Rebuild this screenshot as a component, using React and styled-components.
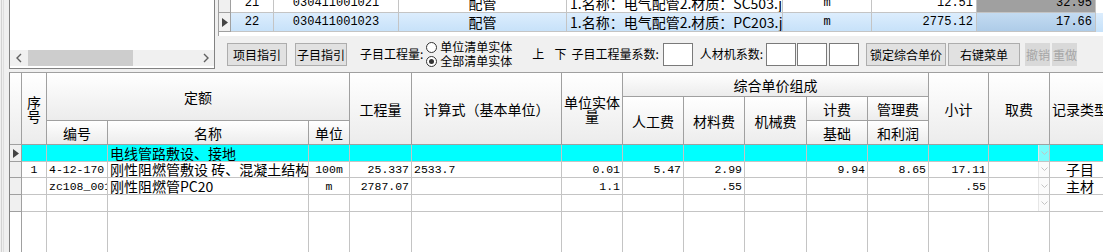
import React from 'react';
import styled, { createGlobalStyle } from 'styled-components';

// ---------------------------------------------------------------------------
// Fonts / colours
// ---------------------------------------------------------------------------
const CJK = `"Noto Sans CJK SC", "Liberation Sans", sans-serif`;
const MONO = `"Liberation Mono", "Noto Sans CJK SC", monospace`;

const GlobalStyle = createGlobalStyle`
  html, body { margin: 0; padding: 0; background: #f0f0f0; }
  body { font-family: ${CJK}; color: #000; }
`;

// ---------------------------------------------------------------------------
// Data
// ---------------------------------------------------------------------------
const UPPER_ROWS = [
  { no: '21', code: '030411001021', name: '配管', desc: '1.名称：电气配管2.材质：SC503.j', unit: 'm', qty: '12.51', price: '32.95' },
  { no: '22', code: '030411001023', name: '配管', desc: '1.名称：电气配管2.材质：PC203.j', unit: 'm', qty: '2775.12', price: '17.66', selected: true },
];

const LOWER_COLS = [
  { key: 'no', align: 'center', mono: true },
  { key: 'code', align: 'left', mono: true },
  { key: 'name', align: 'left' },
  { key: 'unit', align: 'center', mono: true },
  { key: 'qty', align: 'right', mono: true },
  { key: 'expr', align: 'left', mono: true },
  { key: 'unitQty', align: 'right', mono: true },
  { key: 'labor', align: 'right', mono: true },
  { key: 'material', align: 'right', mono: true },
  { key: 'machine', align: 'right', mono: true },
  { key: 'base', align: 'right', mono: true },
  { key: 'mgmt', align: 'right', mono: true },
  { key: 'subtotal', align: 'right', mono: true },
  { key: 'fee', align: 'left', dropdown: true },
  { key: 'type', align: 'center' },
];

const LOWER_ROWS = [
  { id: 'g', height: 17, group: true, current: true, name: '电线管路敷设、接地' },
  { id: 'r1', height: 16, no: '1', code: '4-12-170', name: '刚性阻燃管敷设 砖、混凝土结构暗配', unit: '100m', qty: '25.337', expr: '2533.7', unitQty: '0.01', labor: '5.47', material: '2.99', base: '9.94', mgmt: '8.65', subtotal: '17.11', type: '子目' },
  { id: 'r2', height: 17, code: 'zc108_001', name: '刚性阻燃管PC20', unit: 'm', qty: '2787.07', unitQty: '1.1', material: '.55', subtotal: '.55', type: '主材' },
  { id: 'r3', height: 17 },
];

const JUSTIFY = { left: 'flex-start', center: 'center', right: 'flex-end' };

// ---------------------------------------------------------------------------
// Page frame
// ---------------------------------------------------------------------------
const Page = styled.div`
  width: 1103px;
  height: 252px;
  overflow: hidden;
  display: flex;
  background: #f0f0f0;
`;

const EdgeStrip = styled.div`
  width: 9px;
  flex-shrink: 0;
  background: linear-gradient(
    to right,
    #f0f0f0 0 1px,
    #d2d2d2 1px 2px,
    #f0f0f0 2px 3px,
    #dedede 3px 4px,
    #f0f0f0 4px
  );
`;

const Main = styled.div`
  flex: 1;
  min-width: 0;
  display: flex;
  flex-direction: column;
`;

const TopArea = styled.div`
  height: 72px;
  flex-shrink: 0;
  display: flex;
`;

// Tree panel (left) -----------------------------------------------------------
const TreePanel = styled.div`
  width: 206px;
  height: 69px;
  flex-shrink: 0;
  box-sizing: border-box;
  border: 1px solid #828282;
  border-top: none;
  background: #ffffff;
  display: flex;
  flex-direction: column;
  justify-content: flex-end;
`;

const HScroll = styled.div`
  height: 16px;
  margin-bottom: 2px;
  background: #f0f0f0;
  display: flex;
  align-items: stretch;
`;

const ScrollArrow = styled.div`
  width: 17px;
  display: flex;
  align-items: center;
  justify-content: center;
`;

const ScrollTrack = styled.div`
  flex: 1;
  display: flex;
  align-items: stretch;
  padding-left: 1px;
`;

const ScrollThumb = styled.div`
  width: 105px;
  background: #cdcdcd;
`;

// Right pane ------------------------------------------------------------------
const RightPane = styled.div`
  flex: 1;
  min-width: 0;
  display: flex;
  flex-direction: column;
`;

const UpperGrid = styled.div`
  height: 36px;
  margin-left: 3px;
  box-sizing: border-box;
  padding-bottom: 4px;
  background: #ffffff;
  border-left: 1px solid #a0a0a0;
  display: flex;
  flex-direction: column;
  justify-content: flex-end;
  overflow: hidden;
`;

const UpRow = styled.div`
  display: grid;
  grid-template-columns: 12px 43px 125px 168px 216px 89px 105px 119px;
  height: 19px;
  flex-shrink: 0;
  background: ${(p) => (p.$selected ? 'linear-gradient(#dcedfd, #c6e1f9)' : '#ffffff')};
`;

const UpIndicator = styled.div`
  border-right: 1px solid #a0a0a0;
  border-bottom: 1px solid #a0a0a0;
  background: #f0f0f0;
  display: flex;
  align-items: center;
  justify-content: center;
`;

const UpCell = styled.div`
  border-right: 1px solid #c4c4c4;
  border-bottom: 1px solid #c4c4c4;
  display: flex;
  align-items: center;
  justify-content: ${(p) => JUSTIFY[p.$align || 'left']};
  padding: 0 3px;
  overflow: hidden;
  white-space: nowrap;
  font-family: ${(p) => (p.$mono ? MONO : CJK)};
  font-size: ${(p) => (p.$mono ? '12px' : '14px')};
  line-height: 16px;
  background: ${(p) => p.$bg || 'transparent'};
`;

// Toolbar ---------------------------------------------------------------------
const Toolbar = styled.div`
  height: 36px;
  display: flex;
  align-items: center;
  padding-left: 12px;
  font-family: ${CJK};
  font-size: 12px;
  white-space: nowrap;
`;

const Button = styled.button`
  height: 23px;
  width: ${(p) => p.$w}px;
  margin-left: ${(p) => p.$ml || 0}px;
  padding: 0;
  box-sizing: border-box;
  font-family: ${CJK};
  font-size: 12px;
  color: ${(p) => (p.disabled ? '#a6a6a6' : '#000000')};
  background: ${(p) => (p.disabled ? '#d9d9d9' : '#e1e1e1')};
  border: 1px solid ${(p) => (p.disabled ? '#d9d9d9' : '#adadad')};
  border-radius: 0;
  flex-shrink: 0;
`;

const Label = styled.span`
  margin-left: ${(p) => p.$ml || 0}px;
  line-height: 14px;
`;

const RadioGroup = styled.div`
  margin-left: 3px;
  display: flex;
  flex-direction: column;
`;

const RadioRow = styled.label`
  display: flex;
  align-items: center;
  gap: 3px;
  height: 14px;
  line-height: 14px;
`;

const RadioDot = styled.span`
  width: 11px;
  height: 11px;
  box-sizing: border-box;
  border-radius: 50%;
  border: 1px solid #333333;
  background: #ffffff;
  display: flex;
  align-items: center;
  justify-content: center;

  &::after {
    content: '';
    width: 5px;
    height: 5px;
    border-radius: 50%;
    background: ${(p) => (p.$checked ? '#333333' : 'transparent')};
  }
`;

const Box = styled.div`
  width: 30px;
  height: 23px;
  margin-left: ${(p) => p.$ml || 0}px;
  box-sizing: border-box;
  background: #ffffff;
  border: 1px solid #7a7a7a;
  flex-shrink: 0;
`;

// Lower grid ------------------------------------------------------------------
const LowerGrid = styled.div`
  flex: 1;
  width: 1102px;
  box-sizing: border-box;
  border-top: 1px solid #a0a0a0;
  border-left: 1px solid #828282;
  background: #ffffff;
  display: grid;
  grid-template-columns: 12px 25px 61px 201px 41px 62px 150px 61px 61px 61px 62px 61px 61px 60px 61px 61px;
  grid-template-rows: 24px 24px 24px ${(p) => p.$rows} 1fr;
`;

const HeadCell = styled.div`
  grid-column: ${(p) => p.$c} / span ${(p) => p.$cs || 1};
  grid-row: ${(p) => p.$r} / span ${(p) => p.$rs || 1};
  display: flex;
  align-items: center;
  justify-content: center;
  text-align: center;
  padding: 0 2px;
  overflow: hidden;
  background: linear-gradient(#ffffff, #ececec);
  border-right: 1px solid #a0a0a0;
  border-bottom: 1px solid #a0a0a0;
  font-family: ${CJK};
  font-size: 14px;
  line-height: 14px;
`;

const IndCell = styled.div`
  background: #f0f0f0;
  border-right: 1px solid #a0a0a0;
  border-bottom: 1px solid #a0a0a0;
  display: flex;
  align-items: center;
  justify-content: center;
`;

const Cell = styled.div`
  position: relative;
  border-right: 1px solid #c4c4c4;
  border-bottom: 1px solid #c4c4c4;
  background: ${(p) => (p.$group ? '#00ffff' : '#ffffff')};
  display: flex;
  align-items: center;
  justify-content: ${(p) => JUSTIFY[p.$align]};
  padding: 0 2px;
  overflow: hidden;
  white-space: nowrap;
  font-family: ${(p) => (p.$mono ? MONO : CJK)};
  font-size: ${(p) => (p.$mono ? '11.5px' : '14px')};
  line-height: 15px;
`;

const DropArrow = styled.span`
  position: absolute;
  top: 0;
  right: 0;
  bottom: 0;
  width: 11px;
  box-sizing: border-box;
  border-left: 1px solid #e6e6e6;
  background: ${(p) => (p.$group ? '#7ffcfc' : '#fbfbfb')};
  display: flex;
  align-items: center;
  justify-content: center;
`;

const FillCell = styled.div`
  border-right: 1px solid ${(p) => (p.$ind ? '#a0a0a0' : '#c4c4c4')};
  background: #ffffff;
`;

// ---------------------------------------------------------------------------
// Small drawings
// ---------------------------------------------------------------------------
function Pointer() {
  return (
    <svg width="6" height="9" viewBox="0 0 6 9">
      <path d="M0 0 L6 4.5 L0 9 Z" fill="#444444" />
    </svg>
  );
}

function Chevron({ dir }) {
  const d = dir === 'left' ? 'M5 1 L1 5 L5 9' : 'M1 1 L5 5 L1 9';
  return (
    <svg width="6" height="10" viewBox="0 0 6 10">
      <path d={d} fill="none" stroke="#606060" strokeWidth="1.4" />
    </svg>
  );
}

function DownChevron() {
  return (
    <svg width="7" height="5" viewBox="0 0 7 5">
      <path d="M0.5 0.5 L3.5 3.5 L6.5 0.5" fill="none" stroke="#c4c4c4" strokeWidth="1" />
    </svg>
  );
}

// ---------------------------------------------------------------------------
// Sections
// ---------------------------------------------------------------------------
function Tree() {
  return (
    <TreePanel>
      <HScroll>
        <ScrollArrow><Chevron dir="left" /></ScrollArrow>
        <ScrollTrack><ScrollThumb /></ScrollTrack>
        <ScrollArrow><Chevron dir="right" /></ScrollArrow>
      </HScroll>
    </TreePanel>
  );
}

function ListGrid() {
  return (
    <UpperGrid>
      {UPPER_ROWS.map((r) => (
        <UpRow key={r.no} $selected={r.selected}>
          <UpIndicator>{r.selected && <Pointer />}</UpIndicator>
          <UpCell $align="center" $mono>{r.no}</UpCell>
          <UpCell $align="center" $mono>{r.code}</UpCell>
          <UpCell $align="center">{r.name}</UpCell>
          <UpCell>{r.desc}</UpCell>
          <UpCell $align="center" $mono>{r.unit}</UpCell>
          <UpCell $align="right" $mono>{r.qty}</UpCell>
          <UpCell
            $align="right"
            $mono
            $bg={r.selected ? 'linear-gradient(#c3dbf1, #aecce8)' : '#a0a0a0'}
          >
            {r.price}
          </UpCell>
        </UpRow>
      ))}
    </UpperGrid>
  );
}

function ToolStrip() {
  return (
    <Toolbar>
      <Button $w={60}>项目指引</Button>
      <Button $w={52} $ml={8}>子目指引</Button>
      <Label $ml={13}>子目工程量:</Label>
      <RadioGroup>
        <RadioRow><RadioDot />单位清单实体</RadioRow>
        <RadioRow><RadioDot $checked />全部清单实体</RadioRow>
      </RadioGroup>
      <Label $ml={20}>上</Label>
      <Label $ml={10}>下</Label>
      <Label $ml={5}>子目工程量系数:</Label>
      <Box $ml={4} />
      <Label $ml={7}>人材机系数:</Label>
      <Box $ml={3} />
      <Box $ml={1} />
      <Box $ml={2} />
      <Button $w={80} $ml={7}>锁定综合单价</Button>
      <Button $w={72} $ml={2}>右键菜单</Button>
      <Button $w={25} $ml={5} disabled>撤销</Button>
      <Button $w={25} $ml={2} disabled>重做</Button>
    </Toolbar>
  );
}

function QuotaGrid() {
  const rowTracks = LOWER_ROWS.map((r) => `${r.height}px`).join(' ');
  return (
    <LowerGrid $rows={rowTracks}>
      <HeadCell $c={1} $r={1} $rs={3} />
      <HeadCell $c={2} $r={1} $rs={3}>序号</HeadCell>
      <HeadCell $c={3} $r={1} $cs={3} $rs={2}>定额</HeadCell>
      <HeadCell $c={3} $r={3}>编号</HeadCell>
      <HeadCell $c={4} $r={3}>名称</HeadCell>
      <HeadCell $c={5} $r={3}>单位</HeadCell>
      <HeadCell $c={6} $r={1} $rs={3}>工程量</HeadCell>
      <HeadCell $c={7} $r={1} $rs={3}>计算式（基本单位）</HeadCell>
      <HeadCell $c={8} $r={1} $rs={3}>单位实体量</HeadCell>
      <HeadCell $c={9} $r={1} $cs={5}>综合单价组成</HeadCell>
      <HeadCell $c={9} $r={2} $rs={2}>人工费</HeadCell>
      <HeadCell $c={10} $r={2} $rs={2}>材料费</HeadCell>
      <HeadCell $c={11} $r={2} $rs={2}>机械费</HeadCell>
      <HeadCell $c={12} $r={2}>计费</HeadCell>
      <HeadCell $c={12} $r={3}>基础</HeadCell>
      <HeadCell $c={13} $r={2}>管理费</HeadCell>
      <HeadCell $c={13} $r={3}>和利润</HeadCell>
      <HeadCell $c={14} $r={1} $rs={3}>小计</HeadCell>
      <HeadCell $c={15} $r={1} $rs={3}>取费</HeadCell>
      <HeadCell $c={16} $r={1} $rs={3}>记录类型</HeadCell>

      {LOWER_ROWS.map((row) => (
        <React.Fragment key={row.id}>
          <IndCell>{row.current && <Pointer />}</IndCell>
          {LOWER_COLS.map((col) => (
            <Cell key={col.key} $align={col.align} $mono={col.mono} $group={row.group}>
              {row[col.key]}
              {col.dropdown && (
                <DropArrow $group={row.group}><DownChevron /></DropArrow>
              )}
            </Cell>
          ))}
        </React.Fragment>
      ))}

      <FillCell $ind />
      {LOWER_COLS.map((col) => (
        <FillCell key={col.key} />
      ))}
    </LowerGrid>
  );
}

// ---------------------------------------------------------------------------
// Page
// ---------------------------------------------------------------------------
export default function App() {
  return (
    <>
      <GlobalStyle />
      <Page>
        <EdgeStrip />
        <Main>
          <TopArea>
            <Tree />
            <RightPane>
              <ListGrid />
              <ToolStrip />
            </RightPane>
          </TopArea>
          <QuotaGrid />
        </Main>
      </Page>
    </>
  );
}
